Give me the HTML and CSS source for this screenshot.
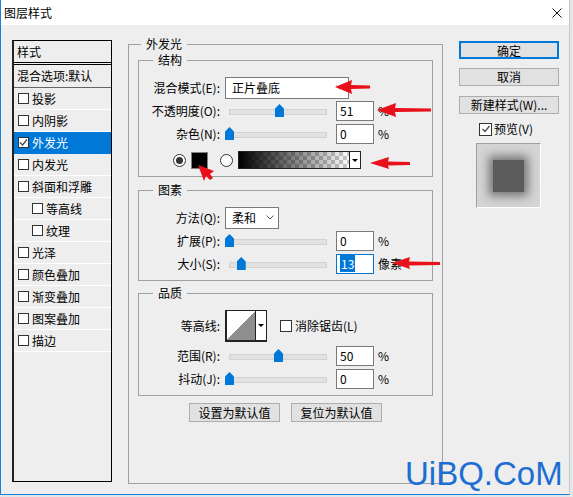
FILE: index.html
```html
<!DOCTYPE html>
<html lang="zh-CN">
<head>
<meta charset="utf-8">
<title>图层样式</title>
<link rel="stylesheet" href="styles.css">
</head>
<body>
<div class="win">
	<div class="titlebar">
		<span>图层样式</span>
		<svg class="close" width="10" height="10" viewBox="0 0 10 10"><path d="M0.5 0.5L9.5 9.5M9.5 0.5L0.5 9.5" stroke="#111" stroke-width="1"/></svg>
	</div>
	<div class="main">
		<!-- style list -->
		<div class="styles">
			<div class="head">样式</div>
			<div class="blend">混合选项:默认</div>
			<div class="item"><span class="cb"></span>投影</div>
			<div class="item"><span class="cb"></span>内阴影</div>
			<div class="item sel"><span class="cb"><svg width="9" height="9" viewBox="0 0 9 9"><path d="M1 4.5L3.5 7L8 1.5" fill="none" stroke="#444" stroke-width="1.2"/></svg></span>外发光</div>
			<div class="item"><span class="cb"></span>内发光</div>
			<div class="item"><span class="cb"></span>斜面和浮雕</div>
			<div class="item sub"><span class="cb"></span>等高线</div>
			<div class="item sub"><span class="cb"></span>纹理</div>
			<div class="item"><span class="cb"></span>光泽</div>
			<div class="item"><span class="cb"></span>颜色叠加</div>
			<div class="item"><span class="cb"></span>渐变叠加</div>
			<div class="item"><span class="cb"></span>图案叠加</div>
			<div class="item"><span class="cb"></span>描边</div>
		</div>

		<fieldset class="grp outer">
			<legend>外发光</legend>
			<fieldset class="grp part">
				<legend>结构</legend>
				<div class="row">
					<span class="lbl">混合模式(E):</span>
					<div class="select mode">正片叠底<svg class="chev" width="8" height="5" viewBox="0 0 8 5"><path d="M0.5 0.5L4 4L7.5 0.5" fill="none" stroke="#555"/></svg></div>
				</div>
				<div class="row">
					<span class="lbl">不透明度(O):</span>
					<div class="slider"><span class="thumb" style="left:51%"></span></div>
					<div class="num">51</div><span class="unit">%</span>
				</div>
				<div class="row">
					<span class="lbl">杂色(N):</span>
					<div class="slider"><span class="thumb" style="left:0%"></span></div>
					<div class="num">0</div><span class="unit">%</span>
				</div>
				<div class="row colors">
					<span class="radio on"></span>
					<span class="swatch"></span>
					<span class="radio"></span>
					<div class="gradient"><span class="ramp"></span><span class="drop"></span></div>
				</div>
			</fieldset>

			<fieldset class="grp part">
				<legend>图素</legend>
				<div class="row">
					<span class="lbl">方法(Q):</span>
					<div class="select method">柔和<svg class="chev" width="8" height="5" viewBox="0 0 8 5"><path d="M0.5 0.5L4 4L7.5 0.5" fill="none" stroke="#555"/></svg></div>
				</div>
				<div class="row">
					<span class="lbl">扩展(P):</span>
					<div class="slider"><span class="thumb" style="left:0%"></span></div>
					<div class="num">0</div><span class="unit">%</span>
				</div>
				<div class="row">
					<span class="lbl">大小(S):</span>
					<div class="slider"><span class="thumb" style="left:12%"></span></div>
					<div class="num active"><span class="hl">13</span></div><span class="unit">像素</span>
				</div>
			</fieldset>

			<fieldset class="grp part">
				<legend>品质</legend>
				<div class="row tall">
					<span class="lbl">等高线:</span>
					<div class="contour"><span class="curve"></span><span class="drop"></span></div>
					<span class="cb aa"></span>消除锯齿(L)
				</div>
				<div class="row gap">
					<span class="lbl">范围(R):</span>
					<div class="slider"><span class="thumb" style="left:50%"></span></div>
					<div class="num">50</div><span class="unit">%</span>
				</div>
				<div class="row">
					<span class="lbl">抖动(J):</span>
					<div class="slider"><span class="thumb" style="left:0%"></span></div>
					<div class="num">0</div><span class="unit">%</span>
				</div>
			</fieldset>

			<div class="defaults">
				<button>设置为默认值</button>
				<button>复位为默认值</button>
			</div>
		</fieldset>

		<div class="side">
			<button class="ok">确定</button>
			<button>取消</button>
			<button>新建样式(W)...</button>
			<div class="check"><span class="cb big"><svg width="10" height="10" viewBox="0 0 10 10"><path d="M1.5 5L4 7.5L8.5 2" fill="none" stroke="#444" stroke-width="1.2"/></svg></span>预览(V)</div>
			<div class="preview"><span class="glow"></span></div>
		</div>
	</div>
</div>

<svg class="arrows" width="573" height="497" viewBox="0 0 573 497">
	<g fill="#e8101a">
		<path d="M335 87L352 80L351 85L370 85.5L370 88.5L351 89L352 94Z"/>
		<path d="M377 110L396 103L395 108L431 108.5L431 111.5L395 112L396 117Z"/>
		<path d="M370 163L389 157L388 161.5L410 162L410 165L388 165.5L389 169Z"/>
		<path d="M198 165L214 171L210 174L213 178L210 180L206 176L204 181Z"/>
		<path d="M392 263L410 257L409 261.5L440 262L440 265L409 265.5L410 269Z"/>
	</g>
</svg>
<div class="mark">UiBQ.CoM</div>
</body>
</html>
```

FILE: styles.css
```css
* { box-sizing: border-box; }
html, body { margin: 0; }
body {
	position: relative;
	width: 573px; height: 497px; overflow: hidden;
	background: #e4e7ea;
	font: 12px/16px "Noto Sans CJK SC", "Noto Sans", sans-serif;
	color: #000;
}

.win {
	width: 570px; height: 495px;
	background: #eeeeee;
	border-left: 1px solid #1a7fd6;
	border-bottom: 1px solid #1a7fd6;
	border-right: 1px solid #c8c8c8;
}
.titlebar {
	height: 25px;
	background: #fff;
	display: flex; align-items: center; justify-content: space-between;
	padding: 0 7px 0 3px;
}

.main { display: flex; align-items: flex-start; padding: 12px 0 0 11px; }

/* left list */
.styles {
	width: 100px; height: 442px; margin-top: 3px;
	border: 1px solid #000; border-left: 2px solid #222;
	background: #eee;
}
.head { height: 24px; line-height: 21px; padding-left: 3px; border-bottom: 3px double #000; }
.blend { height: 23px; line-height: 22px; padding-left: 3px; border-bottom: 1px solid #666; }
.item {
	height: 22px; display: flex; align-items: center;
	padding-left: 4px; border-bottom: 1px solid #fff;
}
.item.sub { padding-left: 18px; }
.item.sel { background: #0078d7; color: #fff; border-bottom-color: #0078d7; }
.cb {
	width: 11px; height: 11px; flex: none; margin-right: 3px;
	border: 1px solid #333; background: #fff;
	display: flex; align-items: center; justify-content: center;
}
.cb.big { width: 13px; height: 13px; margin-right: 2px; }
.cb.aa { width: 12px; height: 12px; margin: 0 3px 0 13px; }

/* groups */
.grp { margin: 0; min-width: 0; border: 1px solid #a0a0a0; }
.grp legend { padding: 0 5px; line-height: 14px; }
.outer { width: 315px; height: 447px; margin-left: 16px; padding: 2px 9px 0; }
.outer > legend { margin-left: 3px; }
.part { padding: 9px 0 5px; }
.part > legend { margin-left: 14px; }
.part + .part { margin-top: 6px; }
.part + .part + .part { margin-top: 5px; }

.row { display: flex; align-items: center; height: 23px; white-space: nowrap; }
.row.tall { height: 32px; margin-top: 1px; }
.row.gap { margin-top: 2px; }
.lbl { width: 81px; margin-right: 5px; text-align: right; }

.select {
	height: 22px; background: #fff; border: 1px solid #7a7a7a;
	display: flex; align-items: center; justify-content: space-between;
	padding: 0 4px 0 6px;
}
.mode { width: 124px; }
.method { width: 54px; }

.slider { position: relative; width: 98px; height: 13px; margin: 0 9px 0 4px; }
.slider::before {
	content: ""; position: absolute; left: 0; right: 0; top: 5px; height: 4px;
	background: #e2e2e2; border: 1px solid #d2d2d2;
}
.thumb {
	position: absolute; top: 0; width: 9px; height: 13px; margin-left: -4px;
	background: #0078d7;
	clip-path: polygon(50% 0, 100% 35%, 100% 100%, 0 100%, 0 35%);
}
.num {
	width: 38px; height: 20px; background: #fff; border: 1px solid #7a7a7a;
	padding-left: 3px; line-height: 18px;
}
.num.active { border-color: #0078d7; }
.hl { background: #0078d7; color: #fff; padding: 0 1px; }
.unit { margin-left: 4px; }

.colors { height: 22px; margin-top: 4px; padding-left: 34px; }
.radio {
	width: 13px; height: 13px; flex: none; border-radius: 50%;
	border: 1px solid #333; background: #fff;
	display: flex; align-items: center; justify-content: center;
}
.radio.on::after { content: ""; width: 7px; height: 7px; border-radius: 50%; background: #333; }
.swatch { width: 17px; height: 17px; margin: 0 12px 0 5px; background: #000; border: 1px solid #808080; }
.gradient { display: flex; width: 123px; height: 18px; margin-left: 5px; border: 1px solid #222; }
.ramp {
	flex: 1;
	background: linear-gradient(to right, #000, rgba(0,0,0,0)),
		repeating-conic-gradient(#c8c8c8 0 25%, #fff 0 50%) 0 0 / 8px 8px;
}
.drop {
	width: 11px; flex: none; background: #fff; border-left: 1px solid #222;
	display: flex; align-items: center; justify-content: center;
}
.drop::after {
	content: ""; border-top: 3px solid #000;
	border-left: 3px solid transparent; border-right: 3px solid transparent;
}

.contour {
	display: flex; width: 42px; height: 32px;
	border: 1px solid #222; border-width: 1px 1px 2px 2px;
}
.curve { flex: 1; background: linear-gradient(to bottom right, #fff 50%, #8e8e8e 50%); }

.defaults { display: flex; justify-content: center; gap: 11px; margin-top: 7px; }
button {
	font: inherit; line-height: 16px; padding: 0; color: #000;
	width: 91px; height: 19px;
	background: #e1e1e1; border: 1px solid #adadad;
}

/* right column */
.side { width: 100px; margin: 4px 0 0 16px; display: flex; flex-direction: column; }
.side button { width: 100%; height: 18px; }
.side button + button { margin-top: 9px; }
.side button + button + button { margin-top: 10px; }
.ok { border: 2px solid #0078d7; }
.check { display: flex; align-items: center; height: 16px; margin-top: 7px; padding-left: 20px; }
.preview {
	width: 65px; height: 65px; margin: 6px 0 0 17px;
	background: #d4d4d4;
	border: 1px solid #fff; border-top-color: #a0a0a0; border-left-color: #a0a0a0;
	display: flex; align-items: center; justify-content: center;
}
.glow { width: 31px; height: 32px; background: #5c5c5c; box-shadow: 0 0 9px 4px rgba(0,0,0,0.45); }

/* overlays */
.arrows { position: absolute; left: 0; top: 0; pointer-events: none; }
.mark {
	position: absolute; left: 405px; top: 457px;
	font: 33px/33px "Liberation Sans", Arial, sans-serif;
	color: #1c6ed2;
}
```
